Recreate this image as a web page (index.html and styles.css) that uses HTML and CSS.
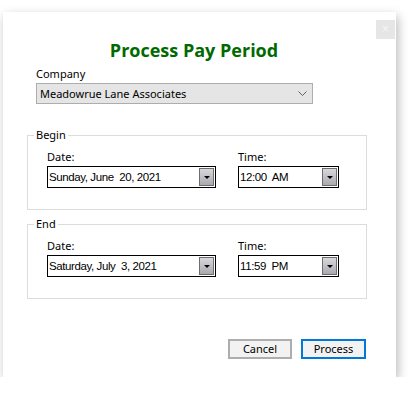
FILE: index.html
```html
<!DOCTYPE html>
<html lang="en">
<head>
    <meta charset="UTF-8">
    <meta name="viewport" content="width=device-width, initial-scale=1.0">
    <title>Process Pay Period</title>
    <link rel="stylesheet" href="styles.css">
</head>
<body>
    <div class="dialog">
        <button class="close-button" type="button">&#215;</button>

        <h1 class="title">Process Pay Period</h1>

        <div class="company">
            <label class="field-label">Company</label>
            <div class="company-select">
                <span>Meadowrue Lane Associates</span>
                <svg class="chevron" width="9" height="5" viewBox="0 0 9 5">
                    <path d="M0.5 0.5 L4.5 4.5 L8.5 0.5" fill="none" stroke="#606060" stroke-width="1"/>
                </svg>
            </div>
        </div>

        <fieldset class="group">
            <legend>Begin</legend>
            <div class="group-row">
                <div class="field field-date">
                    <label class="field-label">Date:</label>
                    <div class="picker">
                        <span class="picker-value">Sunday, June  20, 2021</span>
                        <span class="picker-button"><span class="arrow"></span></span>
                    </div>
                </div>
                <div class="field field-time">
                    <label class="field-label">Time:</label>
                    <div class="picker">
                        <span class="picker-value">12:00  AM</span>
                        <span class="picker-button"><span class="arrow"></span></span>
                    </div>
                </div>
            </div>
        </fieldset>

        <fieldset class="group group-end">
            <legend>End</legend>
            <div class="group-row">
                <div class="field field-date">
                    <label class="field-label">Date:</label>
                    <div class="picker">
                        <span class="picker-value">Saturday, July  3, 2021</span>
                        <span class="picker-button"><span class="arrow"></span></span>
                    </div>
                </div>
                <div class="field field-time">
                    <label class="field-label">Time:</label>
                    <div class="picker">
                        <span class="picker-value">11:59  PM</span>
                        <span class="picker-button"><span class="arrow"></span></span>
                    </div>
                </div>
            </div>
        </fieldset>

        <div class="actions">
            <button class="btn" type="button">Cancel</button>
            <button class="btn btn-default" type="button">Process</button>
        </div>
    </div>
</body>
</html>
```

FILE: styles.css
```css
body {
    margin: 0;
    padding: 0;
    background-color: #fff;
    font-family: "Noto Sans", "Open Sans", sans-serif;
    font-size: 11px;
    color: #000;
}

.dialog {
    position: relative;
    box-sizing: border-box;
    width: 393px;
    height: 365px;
    margin: 12px 0 0 3px;
    padding: 27px 30px 0 24px;
    background-color: #fff;
    box-shadow: 2px 4px 10px rgba(0, 0, 0, 0.28);
}

.close-button {
    position: absolute;
    top: 8px;
    right: 1px;
    width: 19px;
    height: 19px;
    padding: 0;
    border: none;
    background-color: #e6e6e6;
    color: #f7f7f7;
    font-size: 12px;
    line-height: 19px;
}

.title {
    margin: 0;
    padding-right: 5px;
    text-align: center;
    font-family: "Open Sans", sans-serif;
    font-size: 18px;
    font-weight: bold;
    line-height: 23px;
    color: #006a00;
}

.field-label {
    display: block;
    line-height: 16px;
}

.company {
    margin: 4px 0 0 9px;
}

.company-select {
    box-sizing: border-box;
    display: flex;
    justify-content: space-between;
    align-items: center;
    width: 277px;
    height: 21px;
    margin-top: 1px;
    padding: 0 5px 0 3px;
    border: 1px solid #adadad;
    background-color: #e5e5e5;
}

.group {
    box-sizing: border-box;
    width: 340px;
    margin: 23px 0 0;
    padding: 6px 0 21px 19px;
    border: 1px solid #dcdcdc;
}

.group-end {
    margin-top: 6px;
}

.group legend {
    margin-left: -13px;
    padding: 0 2px;
    line-height: 16px;
}

.group-row {
    display: flex;
    gap: 22px;
}

.field-date .picker {
    width: 169px;
}

.field-time .picker {
    width: 101px;
}

.field .field-label {
    margin-bottom: 1px;
}

.picker {
    box-sizing: border-box;
    display: flex;
    justify-content: space-between;
    align-items: center;
    height: 22px;
    padding: 0 1px 0 1px;
    border: 1px solid #000;
    background-color: #fff;
}

.picker-value {
    white-space: pre;
    font-family: "Liberation Sans", Arial, sans-serif;
    font-size: 11.5px;
    letter-spacing: -0.4px;
}

.picker-button {
    box-sizing: border-box;
    display: flex;
    justify-content: center;
    align-items: center;
    width: 15px;
    height: 18px;
    border: 1px solid #6d6d6d;
    background: linear-gradient(#d8d8dc, #a9a9b0);
}

.arrow {
    width: 0;
    height: 0;
    border-left: 3px solid transparent;
    border-right: 3px solid transparent;
    border-top: 3px solid #000;
}

.actions {
    display: flex;
    justify-content: flex-end;
    gap: 9px;
    margin-top: 40px;
}

.btn {
    box-sizing: border-box;
    width: 64px;
    height: 20px;
    padding: 0;
    border: 2px solid #adadad;
    background-color: #f2f2f2;
    font-family: "Noto Sans", sans-serif;
    font-size: 11px;
    line-height: 16px;
    color: #000;
}

.btn-default {
    width: 65px;
    border-color: #0078d7;
}
```
